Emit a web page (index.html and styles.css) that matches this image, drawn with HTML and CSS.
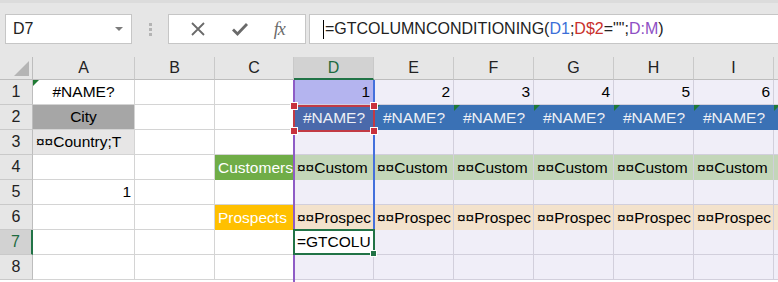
FILE: index.html
```html
<!DOCTYPE html>
<html lang="en">
<head>
    <meta charset="UTF-8">
    <title>Sheet</title>
    <link rel="stylesheet" href="styles.css">
</head>
<body>
    <div class="toolbar">
        <div class="namebox">
            <span>D7</span>
            <span class="dropdown"></span>
        </div>
        <div class="grip"><i></i><i></i><i></i></div>
        <div class="buttons">
            <svg width="16" height="16" viewBox="0 0 16 16"><path d="M2 2 L14 14 M14 2 L2 14" stroke="#6a6a6a" stroke-width="1.8" fill="none"/></svg>
            <svg width="18" height="16" viewBox="0 0 18 16"><path d="M2 8.5 L6.5 13 L16 3" stroke="#6a6a6a" stroke-width="2.8" fill="none"/></svg>
            <span class="fx">fx</span>
        </div>
        <div class="formula"><span class="caret"></span>=GTCOLUMNCONDITIONING(<span class="ref-blue">D1</span>;<span class="ref-red">D$2</span>="";<span class="ref-purple">D:M</span>)</div>
    </div>

    <div class="sheet">
        <div class="corner"><span class="tri"></span></div>
        <div class="colhead">A</div>
        <div class="colhead">B</div>
        <div class="colhead">C</div>
        <div class="colhead active">D</div>
        <div class="colhead">E</div>
        <div class="colhead">F</div>
        <div class="colhead">G</div>
        <div class="colhead">H</div>
        <div class="colhead">I</div>
        <div class="colhead"></div>

        <!-- row 1 -->
        <div class="rowhead">1</div>
        <div class="cell center note">#NAME?</div>
        <div class="cell"></div>
        <div class="cell"></div>
        <div class="cell num d1">1</div>
        <div class="cell num lav">2</div>
        <div class="cell num lav">3</div>
        <div class="cell num lav">4</div>
        <div class="cell num lav">5</div>
        <div class="cell num lav">6</div>
        <div class="cell lav"></div>

        <!-- row 2 -->
        <div class="rowhead">2</div>
        <div class="cell center city">City</div>
        <div class="cell"></div>
        <div class="cell"></div>
        <div class="cell center hdr sel note">#NAME?</div>
        <div class="cell center hdr note">#NAME?</div>
        <div class="cell center hdr note">#NAME?</div>
        <div class="cell center hdr note">#NAME?</div>
        <div class="cell center hdr note">#NAME?</div>
        <div class="cell center hdr note">#NAME?</div>
        <div class="cell hdr note"></div>

        <!-- row 3 -->
        <div class="rowhead">3</div>
        <div class="cell country">¤¤Country;T</div>
        <div class="cell"></div>
        <div class="cell"></div>
        <div class="cell lav"></div>
        <div class="cell lav"></div>
        <div class="cell lav"></div>
        <div class="cell lav"></div>
        <div class="cell lav"></div>
        <div class="cell lav"></div>
        <div class="cell lav"></div>

        <!-- row 4 -->
        <div class="rowhead">4</div>
        <div class="cell"></div>
        <div class="cell"></div>
        <div class="cell customers">Customers</div>
        <div class="cell cust">¤¤Custom</div>
        <div class="cell cust">¤¤Custom</div>
        <div class="cell cust">¤¤Custom</div>
        <div class="cell cust">¤¤Custom</div>
        <div class="cell cust">¤¤Custom</div>
        <div class="cell cust">¤¤Custom</div>
        <div class="cell cust"></div>

        <!-- row 5 -->
        <div class="rowhead">5</div>
        <div class="cell num">1</div>
        <div class="cell"></div>
        <div class="cell"></div>
        <div class="cell lav"></div>
        <div class="cell lav"></div>
        <div class="cell lav"></div>
        <div class="cell lav"></div>
        <div class="cell lav"></div>
        <div class="cell lav"></div>
        <div class="cell lav"></div>

        <!-- row 6 -->
        <div class="rowhead">6</div>
        <div class="cell"></div>
        <div class="cell"></div>
        <div class="cell prospects">Prospects</div>
        <div class="cell pros">¤¤Prospec</div>
        <div class="cell pros">¤¤Prospec</div>
        <div class="cell pros">¤¤Prospec</div>
        <div class="cell pros">¤¤Prospec</div>
        <div class="cell pros">¤¤Prospec</div>
        <div class="cell pros">¤¤Prospec</div>
        <div class="cell pros"></div>

        <!-- row 7 -->
        <div class="rowhead active">7</div>
        <div class="cell"></div>
        <div class="cell"></div>
        <div class="cell"></div>
        <div class="cell editing">=GTCOLU</div>
        <div class="cell lav"></div>
        <div class="cell lav"></div>
        <div class="cell lav"></div>
        <div class="cell lav"></div>
        <div class="cell lav"></div>
        <div class="cell lav"></div>

        <!-- row 8 -->
        <div class="rowhead">8</div>
        <div class="cell"></div>
        <div class="cell"></div>
        <div class="cell"></div>
        <div class="cell lav"></div>
        <div class="cell lav"></div>
        <div class="cell lav"></div>
        <div class="cell lav"></div>
        <div class="cell lav"></div>
        <div class="cell lav"></div>
        <div class="cell lav"></div>

        <!-- formula reference highlights -->
        <div class="ref-range purple"></div>
        <div class="ref-range blue"></div>
        <div class="ref-range red">
            <span class="handle tl"></span>
            <span class="handle tr"></span>
            <span class="handle bl"></span>
            <span class="handle br"></span>
        </div>
        <div class="active-cell"><span class="fill"></span></div>
    </div>
</body>
</html>
```

FILE: styles.css
```css
/* Base */
body {
    margin: 0;
    width: 778px;
    height: 282px;
    overflow: hidden;
    font-family: "Liberation Sans", Arial, sans-serif;
    font-size: 15.5px;
    color: #000;
    background: #ffffff;
}

/* Formula bar */
.toolbar {
    height: 57px;
    box-sizing: border-box;
    padding-top: 11px;
    background: #e6e6e6;
    border-top: 3px solid #dcdcdc;
    display: flex;
    align-items: flex-start;
}

.namebox {
    margin-left: 5px;
    width: 127px;
    height: 30px;
    box-sizing: border-box;
    background: #fff;
    border: 1px solid #c6c6c6;
    display: flex;
    align-items: center;
    justify-content: space-between;
    padding: 0 8px 0 7px;
    font-size: 16px;
    color: #222;
}

.dropdown {
    width: 0;
    height: 0;
    border-left: 4px solid transparent;
    border-right: 4px solid transparent;
    border-top: 4px solid #7c7c7c;
}

.grip {
    width: 36px;
    height: 30px;
    display: flex;
    flex-direction: column;
    align-items: center;
    justify-content: center;
    gap: 2px;
}

.grip i {
    display: block;
    width: 3px;
    height: 3px;
    background: #b4b4b4;
}

.buttons {
    width: 138px;
    height: 30px;
    box-sizing: border-box;
    background: #fff;
    border: 1px solid #c6c6c6;
    display: flex;
    align-items: center;
    justify-content: space-around;
    padding: 0 8px 0 9px;
}

.fx {
    font-family: "Liberation Serif", serif;
    font-style: italic;
    font-size: 18px;
    color: #6a6a6a;
    letter-spacing: -1px;
}

.formula {
    margin-left: 3px;
    flex: 1;
    height: 30px;
    box-sizing: border-box;
    background: #fff;
    border: 1px solid #c6c6c6;
    border-right: none;
    display: flex;
    align-items: center;
    padding-left: 13px;
    font-size: 16px;
    color: #222;
    white-space: nowrap;
}

.caret {
    display: inline-block;
    width: 1px;
    height: 19px;
    background: #000;
    margin-right: 1px;
}

.ref-blue { color: #3b6fd8; }
.ref-red { color: #c9302c; }
.ref-purple { color: #8e4fc4; }

/* Grid */
.sheet {
    position: relative;
    display: grid;
    grid-template-columns: 33px 102px 80px 79px repeat(6, 80px) 1fr;
    grid-template-rows: 23px repeat(8, 25px);
}

.sheet > div {
    box-sizing: border-box;
}

.corner,
.colhead,
.rowhead {
    background: #e6e6e6;
    color: #222;
    font-size: 16px;
    display: flex;
    align-items: center;
    justify-content: center;
}

.corner {
    position: relative;
    border-right: 1px solid #bdbdbd;
    border-bottom: 1px solid #bdbdbd;
}

.tri {
    position: absolute;
    right: 3px;
    bottom: 3px;
    width: 0;
    height: 0;
    border-left: 15px solid transparent;
    border-bottom: 15px solid #b5b5b5;
}

.colhead {
    border-right: 1px solid #c9c9c9;
    border-bottom: 1px solid #bdbdbd;
}

.colhead.active {
    background: #d2d2d2;
    color: #1e6b3f;
    border-bottom: 2px solid #217346;
}

.rowhead {
    border-right: 1px solid #bdbdbd;
    border-bottom: 1px solid #c9c9c9;
}

.rowhead.active {
    background: #d2d2d2;
    color: #1e6b3f;
    border-right: 2px solid #217346;
}

.cell {
    position: relative;
    border-right: 1px solid #d4d4d4;
    border-bottom: 1px solid #d4d4d4;
    padding: 0 3px;
    display: flex;
    align-items: center;
    white-space: nowrap;
    overflow: hidden;
}

.cell.center { justify-content: center; }
.cell.num { justify-content: flex-end; }

.note::before {
    content: "";
    position: absolute;
    left: 0;
    top: 0;
    border-top: 6px solid #1f7a34;
    border-right: 6px solid transparent;
}

.lav {
    background: #f0eef8;
    border-color: #d2cfdc;
}

.d1 {
    background: #b4b4ef;
    border-color: #d2cfdc;
}

.city {
    background: #a6a6a6;
}

.country {
    background: #e7e6e6;
}

.hdr {
    background: #3a71b5;
    color: #eef0f6;
    border-right: none;
    border-bottom: none;
}

.hdr.sel {
    background: #4a69ab;
}

.customers {
    background: #70ad47;
    color: #fff;
    border-bottom: none;
}

.cust {
    background: #c3d6b9;
    border-right: 1px solid #d2cfdc;
    border-bottom: none;
}

.prospects {
    background: #ffc000;
    color: #fff;
    border-bottom: none;
}

.pros {
    background: #f3e2cc;
    border-right: 1px solid #d2cfdc;
    border-bottom: none;
}

.editing {
    background: #fff;
}

/* Reference highlights over the grid */
.ref-range {
    position: absolute;
    box-sizing: border-box;
}

.ref-range.purple {
    left: 293px;
    top: 23px;
    width: 2px;
    height: 210px;
    background: #8e5cc6;
}

.ref-range.blue {
    left: 373px;
    top: 23px;
    width: 2px;
    height: 150px;
    background: #4470dc;
}

.ref-range.red {
    left: 293px;
    top: 48px;
    width: 82px;
    height: 27px;
    border: 2px solid #c23a45;
}

.handle {
    position: absolute;
    width: 6px;
    height: 6px;
    background: #c8323e;
    border: 1px solid #fff;
}

.handle.tl { left: -5px; top: -5px; }
.handle.tr { right: -5px; top: -5px; }
.handle.bl { left: -5px; bottom: -5px; }
.handle.br { right: -5px; bottom: -5px; }

.active-cell {
    position: absolute;
    left: 293px;
    top: 172px;
    width: 82px;
    height: 26px;
    box-sizing: border-box;
    border: 2px solid #217346;
}

.fill {
    position: absolute;
    right: -4px;
    bottom: -4px;
    width: 5px;
    height: 5px;
    background: #217346;
    border: 1px solid #fff;
}
```
